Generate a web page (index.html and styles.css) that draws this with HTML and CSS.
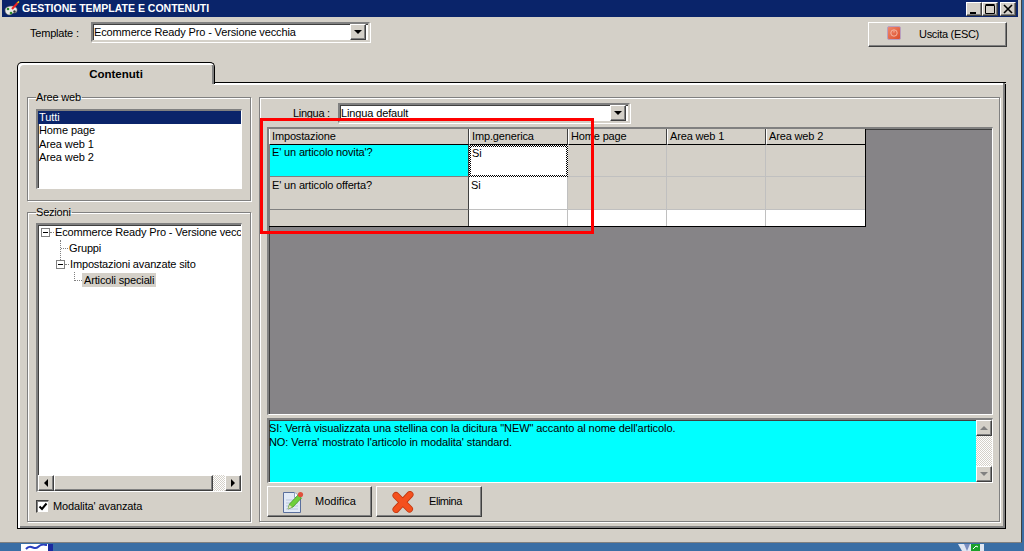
FILE: index.html
```html
<!DOCTYPE html>
<html lang="it">
<head>
<meta charset="utf-8">
<title>Gestione template e contenuti</title>
<link rel="stylesheet" href="styles.css">
</head>
<body>
<div class="window">
  <header class="titlebar">
    <svg class="appicon" width="16" height="16" viewBox="0 0 16 16"><path d="M1 9c0-3 4-4 7-4 3 0 6 2 5 5-1 3-3 1-5 3s-7 1-7-4z" fill="#e8e8e8" stroke="#555" stroke-width=".6"/><circle cx="4" cy="8" r="1.3" fill="#2a8a2a"/><circle cx="7" cy="12" r="1.3" fill="#2a8a2a"/><circle cx="10.5" cy="10.5" r="1.2" fill="#333"/><path d="M8 8 13.5 2" stroke="#e22" stroke-width="2"/><path d="M13.5 2 15 .5" stroke="#fc0" stroke-width="1.5"/></svg>
    <span class="titletext">GESTIONE TEMPLATE E CONTENUTI</span>
    <div class="wincontrols">
      <button class="wbtn"><svg width="14" height="12" viewBox="0 0 14 12"><rect x="3" y="9" width="6" height="2"/></svg></button>
      <button class="wbtn"><svg width="14" height="12" viewBox="0 0 14 12"><path d="M2.5 2.5h9v8h-9zM2.5 1.5h9" fill="none" stroke="#000"/></svg></button>
      <button class="wbtn wbtn-close"><svg width="14" height="12" viewBox="0 0 14 12"><path d="M3 2l8 8M11 2l-8 8" stroke="#000" stroke-width="1.6"/></svg></button>
    </div>
  </header>

  <div class="toolbar">
    <label class="tpl-label">Template :</label>
    <div class="combo combo-template"><span class="combo-text">Ecommerce Ready Pro - Versione vecchia</span><span class="sbtn arrow-d"></span></div>
    <button class="btn btn-exit">
      <svg class="exit-icon" width="14" height="14" viewBox="0 0 14 14"><defs><linearGradient id="exitg" x1="0" y1="0" x2="1" y2="1"><stop offset="0" stop-color="#f08a70"/><stop offset="1" stop-color="#dc4a28"/></linearGradient></defs><rect x=".5" y=".5" width="13" height="13" rx="1.5" fill="url(#exitg)" stroke="#b8a0c0"/><circle cx="7" cy="7" r="3.2" fill="none" stroke="#f6b5a0"/><path d="M7 4.5v2" stroke="#f6b5a0"/></svg>
      <span>Uscita (ESC)</span>
    </button>
  </div>

  <div class="tabstrip"><div class="tab">Contenuti</div><div class="tabline"></div></div>

  <main class="tabpane">
    <aside class="leftcol">
      <fieldset class="group group-aree">
        <legend>Aree web</legend>
        <ul class="listbox">
          <li class="sel">Tutti</li>
          <li>Home page</li>
          <li>Area web 1</li>
          <li>Area web 2</li>
        </ul>
      </fieldset>
      <fieldset class="group group-sezioni">
        <legend>Sezioni</legend>
        <div class="treebox">
          <div class="tree">
            <div class="node n0"><span class="pm"></span><span class="dash"></span><span>Ecommerce Ready Pro - Versione vecchia</span></div>
            <div class="node n1a"><span class="vline"></span><span class="dash dash-long"></span><span>Gruppi</span></div>
            <div class="node n1"><span class="pm"></span><span class="dash"></span><span>Impostazioni avanzate sito</span></div>
            <div class="node n2"><span class="corner"></span><span class="picked">Articoli speciali</span></div>
          </div>
          <div class="hscroll">
            <span class="sbtn arrow-l"></span>
            <span class="hthumb"></span>
            <span class="htrack"></span>
            <span class="sbtn arrow-r"></span>
          </div>
        </div>
        <label class="check"><span class="checkbox"><svg width="10" height="10" viewBox="0 0 10 10"><path d="M1.5 4.5 4 7l4.5-5.5" fill="none" stroke="#000" stroke-width="2"/></svg></span>Modalita' avanzata</label>
      </fieldset>
    </aside>

    <section class="rightgroup">
      <div class="lingua-row">
        <label class="lingua-label">Lingua :</label>
        <div class="combo combo-lingua"><span class="combo-text">Lingua default</span><span class="sbtn arrow-d"></span></div>
      </div>
      <div class="gridwrap">
        <div class="grid">
          <div class="gh first">Impostazione</div><div class="gh">Imp.generica</div><div class="gh">Home page</div><div class="gh">Area web 1</div><div class="gh last">Area web 2</div>
          <div class="gc label cyan">E' un articolo novita'?</div><div class="gc edit focus">Si</div><div class="gc off"></div><div class="gc off"></div><div class="gc off last"></div>
          <div class="gc label r2">E' un articolo offerta?</div><div class="gc edit r2">Si</div><div class="gc off"></div><div class="gc off"></div><div class="gc off last"></div>
          <div class="gc label foot"></div><div class="gc edit foot"></div><div class="gc edit foot"></div><div class="gc edit foot"></div><div class="gc edit foot last"></div>
        </div>
      </div>
      <div class="memo">
        <div class="memotext">
          <p>SI: Verrà visualizzata una stellina con la dicitura "NEW" accanto al nome dell'articolo.</p>
          <p>NO: Verra' mostrato l'articolo in modalita' standard.</p>
        </div>
        <div class="vscroll"><span class="sbtn arrow-u dim"></span><span class="vtrack"></span><span class="sbtn arrow-d dim"></span></div>
      </div>
      <div class="actions">
        <button class="btn btn-mod">
          <svg width="21" height="22" viewBox="0 0 21 22"><path d="M.5 1.5h11l6 5v15H.5z" fill="#e2eaf6" stroke="#5a6f9c"/><path d="M11.5 1.5v5h6" fill="#fff" stroke="#8fa2c6"/><path d="M3 9h12M3 12h12M3 15h12M3 18h12" stroke="#b9c6de"/><path d="M5 18l1.5-5L15 4l3.5 3-8.500 9z" fill="#6fd03c" stroke="#3e8a22" stroke-width=".7"/><path d="M5 18l1.500-4 2.500 2z" fill="#eadfb8"/><circle cx="17.500" cy="3.500" r="2.600" fill="#e0503c"/></svg>
          <span>Modifica</span>
        </button>
        <button class="btn btn-del">
          <svg width="22" height="22" viewBox="0 0 22 22"><path d="M4 4.500 17.500 18M18 3.500 4 18.500" stroke="#c2380f" stroke-width="7" stroke-linecap="round"/><path d="M4 4.500 17.500 18M18 3.500 4 18.500" stroke="#f4501e" stroke-width="5.400" stroke-linecap="round"/></svg>
          <span>Elimina</span>
        </button>
      </div>
    </section>

    <div class="redmark"></div>
  </main>
</div>
<div class="desktop">
  <svg class="dicon-a" width="32" height="7" viewBox="0 0 32 7"><rect width="32" height="7" fill="#fff"/><path d="M5 5c5-6 8 2 12-2s6-2 9-2" fill="none" stroke="#2a3fc0" stroke-width="2"/><rect x="27" width="5" height="7" fill="#1a2aa0"/></svg>
  <svg class="dicon-b" width="26" height="7" viewBox="0 0 26 7"><path d="M0 0h26v7H4z" fill="#dfe6f2"/><path d="M6 0l3 7 3-7z" fill="#7a8ec0"/><rect x="13" width="9" height="7" fill="#1aa02a"/><path d="M15 5l3-3 2 1" stroke="#fff" fill="none"/></svg>
</div>
</body>
</html>
```

FILE: styles.css
```css
* { box-sizing: border-box; }
html, body { margin: 0; padding: 0; }
body {
  width: 1024px; height: 551px; overflow: hidden;
  background: #3a6ea5;
  font: 11px/13px "Liberation Sans", Arial, sans-serif;
  letter-spacing: -0.12px;
  color: #000;
}
ul, p { margin: 0; padding: 0; list-style: none; }
button { font: inherit; letter-spacing: inherit; color: inherit; margin: 0; padding: 0; }

.window {
  width: 1022px; height: 543px;
  background: #d4d0c8;
  border-right: 1px solid #404040;
  border-bottom: 1px solid #808080;
  padding: 0 3px 0 2px;
  display: flex; flex-direction: column;
  position: relative;
}

/* raised edges */
.btn, .wbtn, .sbtn {
  background: #d4d0c8;
  border: 1px solid;
  border-color: #fff #404040 #404040 #fff;
  box-shadow: inset -1px -1px 0 #808080;
}

.titlebar {
  height: 17px; flex: none;
  background: #0a246a;
  display: flex; align-items: center;
  padding: 0 0 0 2px;
  color: #fff;
}
.appicon { flex: none; margin-right: 2px; }
.titletext { font-weight: bold; font-size: 10.5px; letter-spacing: 0; }
.wincontrols { margin-left: auto; display: flex; margin-right: 2px; }
.wbtn { width: 16px; height: 14px; padding: 0; display: flex; align-items: center; justify-content: center; }
.wbtn svg { display: block; }
.wbtn-close { margin-left: 2px; }

.toolbar {
  height: 45px; flex: none;
  display: flex; align-items: flex-start;
  padding-top: 5px;
}
.tpl-label { margin: 5px 0 0 28px; width: 61px; letter-spacing: -0.2px; }
.combo {
  display: flex; align-items: center; justify-content: space-between;
  background: #fff;
  border: 2px solid;
  border-color: #808080 #d4d0c8 #d4d0c8 #808080;
  box-shadow: inset 1px 1px 0 #404040, 1px 1px 0 #fff;
  padding: 0 2px 0 1px;
}
.combo-text { letter-spacing: -0.13px; }
.combo-template { width: 279px; height: 20px; }
.combo-template .combo-text { padding-top: 1px; }
.combo-lingua { width: 292px; height: 20px; }

.sbtn { display: flex; flex: none; align-items: center; justify-content: center; width: 16px; height: 16px; }
.sbtn::before { content: ""; width: 0; height: 0; border: 4px solid transparent; }
.arrow-d::before { border-top-color: #000; border-bottom-width: 0; }
.arrow-u::before { border-bottom-color: #000; border-top-width: 0; }
.arrow-l::before { border-right-color: #000; border-left-width: 0; }
.arrow-r::before { border-left-color: #000; border-right-width: 0; }
.dim.arrow-u::before { border-bottom-color: #808080; }
.dim.arrow-d::before { border-top-color: #808080; }

.btn { display: flex; align-items: center; }
.btn-exit {
  width: 139px; height: 25px;
  margin-left: auto; margin-right: 11px;
  padding-left: 18px;
  letter-spacing: -0.3px;
}
.exit-icon { margin-right: 18px; flex: none; margin-bottom: 3px; }

.tabstrip { height: 22px; flex: none; display: flex; margin-left: 15px; margin-right: 12px; align-items: stretch; }
.tab {
  width: 198px;
  height: 22px;
  background: #d4d0c8;
  border: 1px solid #000;
  border-bottom: 0;
  border-radius: 5px 5px 0 0;
  box-shadow: inset 2px 2px 0 #fff, inset -2px 0 0 #808080;
  text-align: center;
  font-weight: bold;
  font-size: 11.5px;
  letter-spacing: 0;
  line-height: 22px;
  position: relative;
  z-index: 1;
}
.tabline { flex: 1; border-bottom: 1px solid #000; height: 21px; }

.tabpane {
  flex: none;
  height: 445px;
  margin-left: 15px; margin-right: 12px;
  border: 1px solid #000; border-top: 0;
  box-shadow: inset 2px 0 0 #fff, inset 0 -2px 0 #808080, inset -2px 0 0 #808080;
  display: flex; align-items: stretch;
  padding: 1px 5px 6px 9px;
  position: relative;
}
.tabpane::before { content: ""; position: absolute; left: 196px; right: 0; top: -1px; height: 2px; background: #fff; box-shadow: inset -2px 0 0 #808080; }

.leftcol { width: 224px; flex: none; display: flex; flex-direction: column; margin-right: 8px; }
.group {
  margin: 0; padding: 0 8px;
  border: 1px solid #808080;
  box-shadow: 1px 1px 0 #fff, inset 1px 1px 0 #fff;
  min-width: 0;
}
.group legend { margin-left: 0; padding: 0 1px 0 0; line-height: 12px; letter-spacing: -0.2px; }
.group-aree { height: 110px; flex: none; margin-top: 6px; }
.group-sezioni { flex: 1; margin-top: 5px; }
.listbox, .treebox, .memo, .gridwrap {
  border-style: solid;
  border-width: 2px 1px 1px 2px;
  border-color: #808080 #fff #fff #808080;
  box-shadow: inset 1px 1px 0 #404040;
}
.listbox { height: 80px; margin-top: 6px; background: #fff; letter-spacing: -0.1px; }
.listbox li { height: 13.33px; padding-left: 1px; line-height: 13px; }
.listbox li.sel { background: #0a246a; color: #fff; }
.treebox { height: 269px; margin-top: 5px; background: #fff; display: flex; flex-direction: column; overflow: hidden; }
.tree { flex: 1; overflow: hidden; margin-top: -1px; letter-spacing: -0.15px; }
.node { height: 16px; display: flex; align-items: center; white-space: nowrap; }
.n0 { padding-left: 3px; }
.n1a { padding-left: 22px; }
.n1 { padding-left: 18px; }
.n2 { padding-left: 36px; }
.pm { width: 9px; height: 9px; border: 1px solid #808080; flex: none; position: relative; background: #fff; }
.pm::after { content: ""; position: absolute; left: 1px; right: 1px; top: 3px; height: 1px; background: #000; }
.dash { width: 4px; border-top: 1px dotted #808080; flex: none; margin-right: 1px; }
.dash-long { width: 7px; }
.vline { width: 1px; flex: none; height: 16px; position: relative; }
.vline::before { content: ""; position: absolute; left: 0; top: 0; bottom: -4px; border-left: 1px dotted #808080; }
.corner { width: 8px; height: 16px; flex: none; position: relative; }
.corner::before { content: ""; position: absolute; left: 0; top: 0; height: 8px; width: 7px; border-left: 1px dotted #808080; border-bottom: 1px dotted #808080; }
.picked { background: #d4d0c8; padding: 0 2px; line-height: 14px; }

.hscroll { height: 16px; display: flex; flex: none; }
.hthumb { width: 159px; background: #d4d0c8; border: 1px solid; border-color: #fff #404040 #404040 #fff; box-shadow: inset -1px -1px 0 #808080; }
.htrack { flex: 1; background: repeating-conic-gradient(#fff 0 25%, #d4d0c8 0 50%) 0 0 / 2px 2px; }
.check { display: flex; align-items: center; margin-top: 8px; }
.checkbox {
  width: 13px; height: 13px; background: #fff; margin-right: 4px; flex: none;
  border: 1px solid; border-color: #404040 #d4d0c8 #d4d0c8 #404040;
  box-shadow: inset 1px 1px 0 #808080;
  display: flex; align-items: center; justify-content: center;
}

.rightgroup {
  flex: none; width: 741px; height: 425px;
  margin-top: 12px;
  align-self: flex-start;
  border: 1px solid #808080;
  box-shadow: 1px 1px 0 #fff, inset 1px 1px 0 #fff;
  padding: 5px 6px 0 7px;
  display: flex; flex-direction: column;
}
.lingua-row { height: 24px; display: flex; flex: none; }
.lingua-label { margin: 4px 0 0 26px; width: 45px; letter-spacing: -0.3px; }

.gridwrap {
  height: 288px; flex: none;
  background: #868487;
  overflow: hidden;
}
.grid {
  display: grid;
  grid-template-columns: 200px 99px 99px 99px 99px;
  grid-template-rows: 17px 32px 33px 16px;
  width: 597px;
  border-right: 1px solid #000; border-bottom: 1px solid #000;
  margin-top: -1px;
  letter-spacing: -0.15px;
}
.gh {
  background: #d4d0c8; padding: 1px 0 0 2px;
  border-top: 1px solid #fff;
  border-left: 1px solid #fff;
  border-right: 1px solid #404040;
  border-bottom: 1px solid #000;
}
.gh.last { border-right: 0; }
.gc { padding: 1px 0 0 2px; border-right: 1px solid #c0c0c0; border-bottom: 1px solid #c0c0c0; }
.gc.r2 { padding-top: 2px; }
.gc.last { border-right: 0; }
.gc.label { background: #d4d0c8; border-right: 1px solid #404040; border-bottom: 1px solid #808080; border-left: 1px solid #808080; }
.gc.cyan { background: #0ff; }
.gc.edit { background: #fff; }
.gc.off { background: #d4d0c8; }
.gc.foot { border-bottom: 0; }
.gc.focus {
  border: 2px solid transparent;
  padding: 0 0 0 1px;
  background: linear-gradient(#fff, #fff) padding-box, repeating-conic-gradient(#000 0 25%, #fff 0 50%) 0 0 / 2px 2px border-box;
}

.memo {
  height: 65px; flex: none; margin-top: 3px;
  display: flex;
  background: #0ff;
}
.memotext { flex: 1; padding: 1px 0 0 0; letter-spacing: -0.08px; line-height: 14px; }
.vscroll { width: 16px; display: flex; flex-direction: column; flex: none; background: repeating-conic-gradient(#fff 0 25%, #d4d0c8 0 50%) 0 0 / 2px 2px; }
.vtrack { flex: 1; }

.actions { display: flex; margin-top: 3px; gap: 4px; }
.actions .btn { height: 31px; }
.actions svg { flex: none; }
.btn-mod { width: 105px; padding-left: 15px; letter-spacing: 0; }
.btn-mod span { margin-left: 11px; }
.btn-del { width: 106px; padding-left: 15px; letter-spacing: -0.45px; }
.btn-del span { margin-left: 15px; }

.redmark {
  position: absolute;
  left: 242px; top: 34px;
  width: 334px; height: 116px;
  border: 3px solid #f00;
  pointer-events: none;
}

.desktop { height: 8px; position: relative; }
.dicon-a { position: absolute; left: 21px; top: 1px; }
.dicon-b { position: absolute; left: 958px; top: 1px; }
```
